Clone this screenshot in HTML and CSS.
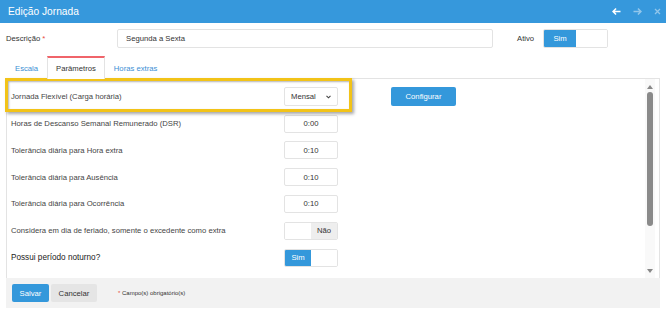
FILE: index.html
```html
<!DOCTYPE html>
<html lang="pt">
<head>
<meta charset="utf-8">
<title>Edição Jornada</title>
<link rel="stylesheet" href="styles.css">
</head>
<body>
<div class="header">
  <div class="title">Edição Jornada</div>
  <div class="hicons">
    <svg class="hic" width="9" height="7" viewBox="0 0 9 7"><path d="M0 3.5 L3.5 0 L4.6 1.1 L2.9 2.7 H8.5 V4.3 H2.9 L4.6 5.9 L3.5 7 Z" fill="#fff"/></svg>
    <svg class="hic faded" width="9" height="7" viewBox="0 0 9 7"><path d="M9 3.5 L5.5 0 L4.4 1.1 L6.1 2.7 H0.5 V4.3 H6.1 L4.4 5.9 L5.5 7 Z" fill="#fff"/></svg>
    <svg class="hic faded" width="7" height="7" viewBox="0 0 7 7"><path d="M1 1 L6 6 M6 1 L1 6" stroke="#fff" stroke-width="1.3"/></svg>
  </div>
</div>
<div class="main">
  <div class="desc-row">
    <div class="desc-label">Descrição <span class="req">*</span></div>
    <div class="desc-input">Segunda a Sexta</div>
    <div class="ativo">Ativo</div>
    <div class="toggle big on"><span class="tg-on">Sim</span><span class="tg-off"></span></div>
  </div>
  <div class="tabs">
    <div class="tab">Escala</div>
    <div class="tab active">Parâmetros</div>
    <div class="tab">Horas extras</div>
  </div>
  <div class="panel">
    <div class="highlight"></div>
    <div class="rows">
      <div class="row">
        <div class="label">Jornada Flexível (Carga horária)</div>
        <div class="select">Mensal<svg class="chev" width="5" height="4" viewBox="0 0 5 4"><path d="M0.5 0.8 L2.5 2.8 L4.5 0.8" fill="none" stroke="#444" stroke-width="1.1"/></svg></div>
        <div class="btn primary cfg">Configurar</div>
      </div>
      <div class="row">
        <div class="label">Horas de Descanso Semanal Remunerado (DSR)</div>
        <div class="input">0:00</div>
      </div>
      <div class="row">
        <div class="label">Tolerância diária para Hora extra</div>
        <div class="input">0:10</div>
      </div>
      <div class="row">
        <div class="label">Tolerância diária para Ausência</div>
        <div class="input">0:10</div>
      </div>
      <div class="row">
        <div class="label">Tolerância diária para Ocorrência</div>
        <div class="input">0:10</div>
      </div>
      <div class="row">
        <div class="label">Considera em dia de feriado, somente o excedente como extra</div>
        <div class="toggle off"><span class="tg-blank"></span><span class="tg-no">Não</span></div>
      </div>
      <div class="row">
        <div class="label strong">Possui período noturno?</div>
        <div class="toggle on"><span class="tg-on">Sim</span><span class="tg-off"></span></div>
      </div>
    </div>
    <div class="scrollbar">
      <div class="sb-up"></div>
      <div class="sb-thumb"></div>
      <div class="sb-down"></div>
    </div>
  </div>
  <div class="footer">
    <div class="btn primary">Salvar</div>
    <div class="btn secondary">Cancelar</div>
    <div class="note"><span class="req">*</span> Campo(s) obrigatório(s)</div>
  </div>
</div>
</body>
</html>
```

FILE: styles.css
```css
* { box-sizing: border-box; }
html, body { margin: 0; padding: 0; background: #fff; }
body {
  font-family: "Liberation Sans", Arial, sans-serif;
  font-size: 7.7px;
  color: #444;
  width: 666px;
  height: 309px;
  overflow: hidden;
}
.header {
  height: 23px;
  background: #3698dc;
  display: flex;
  align-items: center;
  justify-content: space-between;
  padding: 0 5px 0 8px;
}
.title { color: #fff; font-size: 10.2px; }
.hicons { display: flex; align-items: center; gap: 12px; }
.hic { display: block; }
.hic.faded { opacity: 0.45; }

.main { padding: 0 6px; }

.desc-row {
  display: flex;
  align-items: center;
  margin-top: 6px;
  height: 19px;
}
.desc-label { width: 111px; color: #333; }
.req { color: #e74c3c; }
.desc-input {
  width: 376px;
  height: 19px;
  border: 1px solid #e3e3e3;
  border-radius: 2px;
  padding-left: 8px;
  display: flex;
  align-items: center;
  color: #333;
}
.ativo { margin-left: 24px; width: 26px; color: #333; }

.toggle {
  display: flex;
  width: 54px;
  height: 18px;
  border: 1px solid #e3e3e3;
  border-radius: 2px;
  overflow: hidden;
}
.toggle.big { width: 65px; height: 19px; }
.toggle span { display: flex; align-items: center; justify-content: center; }
.tg-on { background: #3498db; color: #fff; width: 26px; }
.toggle.big .tg-on { width: 32px; }
.tg-off { flex: 1; background: #fff; }
.tg-blank { width: 26px; background: #fff; }
.tg-no { flex: 1; background: #eee; color: #333; }

.tabs {
  display: flex;
  margin-top: 8px;
  height: 23px;
  position: relative;
  z-index: 1;
  margin-bottom: -1px;
}
.tab {
  padding: 0 8px;
  display: flex;
  align-items: center;
  color: #3a8fd4;
  border-top: 2px solid transparent;
  border-left: 1px solid transparent;
  border-right: 1px solid transparent;
}
.tab.active {
  border-top-color: #f0646a;
  border-left-color: #e3e3e3;
  border-right-color: #e3e3e3;
  background: #fff;
  color: #333;
}

.panel {
  position: relative;
  display: flex;
  height: 200px;
  border: 1px solid #e3e3e3;
  border-bottom: none;
}
.highlight {
  position: absolute;
  left: -2px;
  top: -1px;
  width: 347px;
  height: 34px;
  border: 3px solid #f2c318;
  box-shadow: 2px 2px 3px rgba(0,0,0,0.35), inset 1px 1px 2px rgba(0,0,0,0.3);
  pointer-events: none;
}
.rows {
  flex: 1;
  padding: 4.4px 0 0 4px;
}
.row {
  display: flex;
  align-items: center;
  height: 26.8px;
}
.label { width: 273px; color: #444; }
.label.strong { font-size: 8.2px; color: #222; }
.input, .select {
  width: 54px;
  height: 18px;
  border: 1px solid #e3e3e3;
  border-radius: 2px;
  display: flex;
  align-items: center;
  justify-content: center;
  color: #333;
}
.select { justify-content: flex-start; padding-left: 6px; position: relative; height: 19px; }
.chev { position: absolute; right: 6px; top: 7px; }
.btn {
  height: 18px;
  display: flex;
  align-items: center;
  justify-content: center;
  border-radius: 2px;
}
.primary { background: #3498db; color: #fff; }
.cfg { width: 65px; margin-left: 53px; height: 19px; }
.secondary { background: #e5e5e5; color: #333; }

.scrollbar {
  width: 10px;
  margin-right: 4px;
  background: #f9f9f9;
  position: relative;
}
.sb-up {
  position: absolute;
  left: 2px; top: 6px;
  width: 0; height: 0;
  border-left: 3px solid transparent;
  border-right: 3px solid transparent;
  border-bottom: 4px solid #888;
}
.sb-thumb {
  position: absolute;
  left: 2px; top: 13px;
  width: 6px; height: 134px;
  background: #8a8a8a;
  border-radius: 3px;
}
.sb-down {
  position: absolute;
  left: 2px; top: 190px;
  width: 0; height: 0;
  border-left: 3px solid transparent;
  border-right: 3px solid transparent;
  border-top: 4px solid #888;
}

.footer {
  height: 30px;
  background: #f2f2f2;
  display: flex;
  align-items: center;
  padding-left: 6px;
  gap: 2px;
}
.footer .primary { width: 37px; }
.footer .secondary { width: 46px; }
.note { font-size: 6px; color: #333; margin-left: 19px; }
```
